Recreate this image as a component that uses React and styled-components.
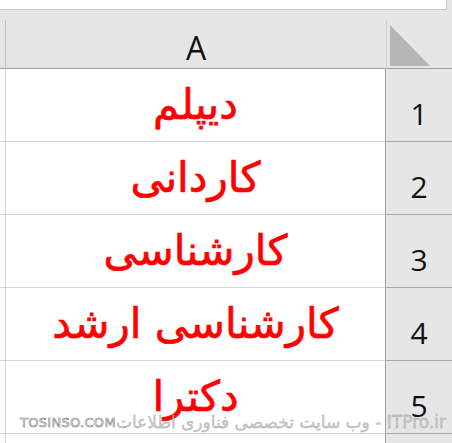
import styled, { createGlobalStyle } from "styled-components";

const GlobalStyle = createGlobalStyle`
  html, body {
    margin: 0;
    padding: 0;
    background: #e6e6e6;
    overflow: hidden;
  }
`;

const Page = styled.div`
  position: relative;
  width: 452px;
  height: 443px;
  overflow: hidden;
  background: #e6e6e6;
`;

const FormulaBar = styled.div`
  width: 447px;
  height: 10px;
  background: #ffffff;
  border-bottom: 1px solid #c6c6c6;
  border-right: 1px solid #c6c6c6;
  box-sizing: border-box;
`;

const Gap = styled.div`
  height: 10px;
`;

const Sheet = styled.div`
  display: grid;
  grid-template-columns: 6px 380px 66px;
  grid-template-rows: 49px repeat(6, 73px);
`;

const HeadCell = styled.div`
  box-sizing: border-box;
  background: #e6e6e6;
  border-bottom: 1px solid #9e9e9e;
  border-right: ${(p) => (p.$edge ? "1px solid #c2c2c2" : "none")};
  display: flex;
  align-items: center;
  justify-content: center;
  font-family: "Open Sans", "DejaVu Sans", sans-serif;
  font-size: 32px;
  color: #111;
  padding-top: 6px;
`;

const Corner = styled.div`
  box-sizing: border-box;
  background: #e6e6e6;
  border-bottom: 1px solid #9e9e9e;
  border-left: 1px solid #d0d0d0;
  padding: 5px 0 0 3px;
`;

const Triangle = styled.div`
  width: 0;
  height: 0;
  border-top: 41px solid transparent;
  border-left: 40px solid #b5b5b5;
`;

const Cell = styled.div`
  box-sizing: border-box;
  background: #ffffff;
  border-bottom: 1px solid #d4d4d4;
  border-right: ${(p) => (p.$edge ? "1px solid #d4d4d4" : "1px solid #9e9e9e")};
  display: flex;
  align-items: center;
  justify-content: center;
  direction: rtl;
  font-family: "DejaVu Sans", sans-serif;
  font-size: 42px;
  color: #ff0000;
  -webkit-text-stroke: 0.7px #ff0000;
  padding-bottom: 2px;
  white-space: nowrap;
`;

const RowHead = styled.div`
  box-sizing: border-box;
  background: #e6e6e6;
  border-bottom: 1px solid #a8a8a8;
  display: flex;
  align-items: center;
  justify-content: center;
  font-family: "Open Sans", "DejaVu Sans", sans-serif;
  font-size: 30px;
  color: #111;
  padding-top: 16px;
`;

const Watermark = styled.div`
  position: absolute;
  left: 20px;
  right: 27px;
  top: 410px;
  height: 24px;
  display: flex;
  align-items: center;
  justify-content: space-between;
  white-space: nowrap;
  pointer-events: none;
`;

const Brand = styled.span`
  font-family: "DejaVu Sans", sans-serif;
  font-size: 13px;
  letter-spacing: 0.3px;
  color: #ffffff;
  -webkit-text-stroke: 0.6px #6a6a6a;
  opacity: 0.85;
`;

const Site = styled.span`
  font-family: "DejaVu Sans", sans-serif;
  font-size: 17px;
  color: #c4c4c4;
  direction: rtl;
  -webkit-text-stroke: 0.3px #9a9a9a;
  opacity: 0.9;
`;

const rows = ["دیپلم", "کاردانی", "کارشناسی", "کارشناسی ارشد", "دکترا", ""];

export default function App() {
  return (
    <Page>
      <GlobalStyle />
      <FormulaBar />
      <Gap />
      <Sheet>
        <HeadCell $edge />
        <HeadCell>A</HeadCell>
        <Corner>
          <Triangle />
        </Corner>
        {rows.map((text, i) => [
          <Cell key={"b" + i} $edge />,
          <Cell key={"a" + i}>{text}</Cell>,
          <RowHead key={"r" + i}>{i + 1}</RowHead>,
        ])}
      </Sheet>
      <Watermark>
        <Brand>TOSINSO.COM</Brand>
        <Site>ITPro.ir - وب سایت تخصصی فناوری اطلاعات</Site>
      </Watermark>
    </Page>
  );
}
